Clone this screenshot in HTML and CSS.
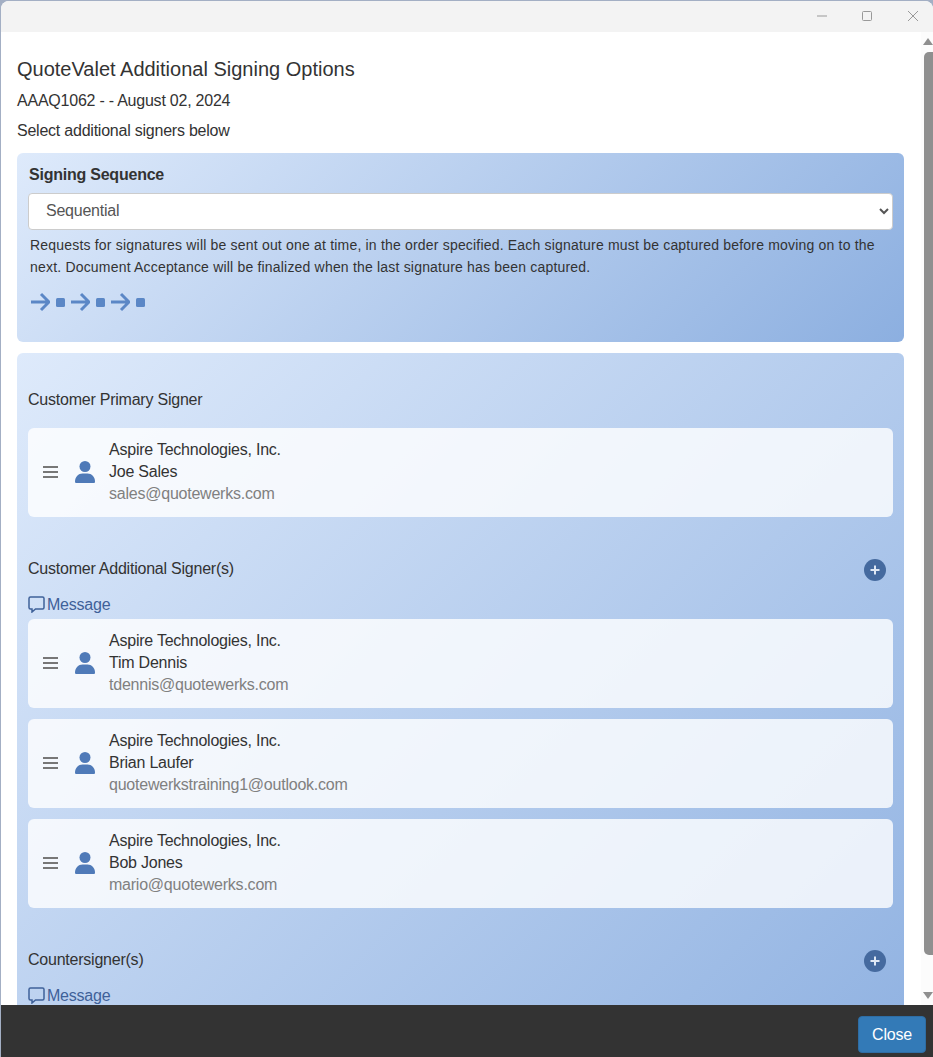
FILE: index.html
```html
<!DOCTYPE html>
<html>
<head>
    <meta charset="UTF-8">
    <title>QuoteValet Additional Signing Options</title>
    <link rel="stylesheet" href="styles.css">
</head>
<body>
<div class="window">
    <div class="titlebar">
        <svg class="win-btn" width="40" height="32" viewBox="3 0 40 32"><path d="M19 16h10" stroke="#999" fill="none"/></svg>
        <svg class="win-btn" width="40" height="32" viewBox="3 0 40 32"><rect x="18.5" y="11.5" width="9" height="9" rx="1" stroke="#999" fill="none"/></svg>
        <svg class="win-btn" width="40" height="32" viewBox="3 0 40 32"><path d="M18 11l10 10M28 11l-10 10" stroke="#999" fill="none"/></svg>
    </div>

    <div class="main">
        <div class="content">
            <h1 class="title">QuoteValet Additional Signing Options</h1>
            <p class="subtitle order-line">AAAQ1062 - - August 02, 2024</p>
            <p class="subtitle">Select additional signers below</p>

            <div class="panel sequence">
                <div class="sequence-label">Signing Sequence</div>
                <select class="sequence-select">
                    <option>Sequential</option>
                </select>
                <p class="sequence-text">Requests for signatures will be sent out one at time, in the order specified. Each signature must be captured before moving on to the next. Document Acceptance will be finalized when the last signature has been captured.</p>
                <div class="sequence-icons">
                    <svg class="arrow" width="20" height="20" viewBox="0 0 20 20"><path d="M1 10h18M11 2l8 8-8 8" /></svg>
                    <span class="stop"></span>
                    <svg class="arrow" width="20" height="20" viewBox="0 0 20 20"><path d="M1 10h18M11 2l8 8-8 8" /></svg>
                    <span class="stop"></span>
                    <svg class="arrow" width="20" height="20" viewBox="0 0 20 20"><path d="M1 10h18M11 2l8 8-8 8" /></svg>
                    <span class="stop"></span>
                </div>
            </div>

            <div class="panel signers">
                <div class="group-head first">
                    <span>Customer Primary Signer</span>
                </div>
                <div class="card">
                    <svg class="drag" width="15" height="12" viewBox="0 0 15 12"><path d="M0 1h15M0 6h15M0 11h15" /></svg>
                    <svg class="person" width="20" height="22" viewBox="0 0 20 22"><circle cx="10" cy="5.500" r="5.500" /><path d="M0 20.500c0-4.500 3.500-8 7.500-8h5c4 0 7.500 3.500 7.500 8 0 1-.5 1.500-1.500 1.500h-17c-1 0-1.500-.5-1.500-1.500z" /></svg>
                    <div class="card-text">
                        <div>Aspire Technologies, Inc.</div>
                        <div>Joe Sales</div>
                        <div class="email">sales@quotewerks.com</div>
                    </div>
                </div>

                <div class="group-head">
                    <span>Customer Additional Signer(s)</span>
                    <svg class="add" width="22" height="22" viewBox="0 0 22 22"><circle cx="11" cy="11" r="11" /><path d="M11 6.500v9M6.500 11h9" /></svg>
                </div>
                <div class="message">
                    <svg width="17" height="17" viewBox="0 0 17 17"><path d="M2.500 1h12A1.500 1.500 0 0 1 16 2.500v9a1.500 1.500 0 0 1-1.500 1.500H7.500L4 16v-3H2.500A1.500 1.500 0 0 1 1 11.500v-9A1.500 1.500 0 0 1 2.500 1z" /></svg>
                    <span>Message</span>
                </div>
                <div class="card">
                    <svg class="drag" width="15" height="12" viewBox="0 0 15 12"><path d="M0 1h15M0 6h15M0 11h15" /></svg>
                    <svg class="person" width="20" height="22" viewBox="0 0 20 22"><circle cx="10" cy="5.500" r="5.500" /><path d="M0 20.500c0-4.500 3.500-8 7.500-8h5c4 0 7.500 3.500 7.500 8 0 1-.5 1.500-1.500 1.500h-17c-1 0-1.500-.5-1.500-1.500z" /></svg>
                    <div class="card-text">
                        <div>Aspire Technologies, Inc.</div>
                        <div>Tim Dennis</div>
                        <div class="email">tdennis@quotewerks.com</div>
                    </div>
                </div>
                <div class="card">
                    <svg class="drag" width="15" height="12" viewBox="0 0 15 12"><path d="M0 1h15M0 6h15M0 11h15" /></svg>
                    <svg class="person" width="20" height="22" viewBox="0 0 20 22"><circle cx="10" cy="5.500" r="5.500" /><path d="M0 20.500c0-4.500 3.500-8 7.500-8h5c4 0 7.500 3.500 7.500 8 0 1-.5 1.500-1.500 1.500h-17c-1 0-1.500-.5-1.500-1.500z" /></svg>
                    <div class="card-text">
                        <div>Aspire Technologies, Inc.</div>
                        <div>Brian Laufer</div>
                        <div class="email">quotewerkstraining1@outlook.com</div>
                    </div>
                </div>
                <div class="card">
                    <svg class="drag" width="15" height="12" viewBox="0 0 15 12"><path d="M0 1h15M0 6h15M0 11h15" /></svg>
                    <svg class="person" width="20" height="22" viewBox="0 0 20 22"><circle cx="10" cy="5.500" r="5.500" /><path d="M0 20.500c0-4.500 3.500-8 7.500-8h5c4 0 7.500 3.500 7.500 8 0 1-.5 1.500-1.500 1.500h-17c-1 0-1.500-.5-1.500-1.500z" /></svg>
                    <div class="card-text">
                        <div>Aspire Technologies, Inc.</div>
                        <div>Bob Jones</div>
                        <div class="email">mario@quotewerks.com</div>
                    </div>
                </div>

                <div class="group-head">
                    <span>Countersigner(s)</span>
                    <svg class="add" width="22" height="22" viewBox="0 0 22 22"><circle cx="11" cy="11" r="11" /><path d="M11 6.500v9M6.500 11h9" /></svg>
                </div>
                <div class="message">
                    <svg width="17" height="17" viewBox="0 0 17 17"><path d="M2.500 1h12A1.500 1.500 0 0 1 16 2.500v9a1.500 1.500 0 0 1-1.500 1.500H7.500L4 16v-3H2.500A1.500 1.500 0 0 1 1 11.500v-9A1.500 1.500 0 0 1 2.500 1z" /></svg>
                    <span>Message</span>
                </div>
            </div>
        </div>

        <div class="scrollbar">
            <span class="scroll-up"></span>
            <div class="scroll-thumb"></div>
            <span class="scroll-down"></span>
        </div>
    </div>

    <div class="footer">
        <button class="close-btn">Close</button>
    </div>
</div>
</body>
</html>
```
FILE: styles.css
```css
* {
    box-sizing: border-box;
}
html, body {
    height: 100%;
    margin: 0;
    overflow: hidden;
}
body {
    font-family: "Liberation Sans", Arial, sans-serif;
    font-size: 16px;
    letter-spacing: -0.23px;
    line-height: 22px;
    color: #333;
    background-color: #a3afc4;
}
.window {
    display: flex;
    flex-direction: column;
    height: 100%;
    margin-top: 1px;
    margin-left: 1px;
    background: white;
    border-top-left-radius: 8px;
    border-top-right-radius: 8px;
    overflow: hidden;
}
.titlebar {
    display: flex;
    flex: none;
    justify-content: flex-end;
    gap: 6px;
    height: 31px;
    background-color: #f3f3f3;
    align-items: center;
}
.win-btn {
    display: block;
    margin-top: -1px;
}
.main {
    display: flex;
    flex: 1;
    min-height: 0;
    overflow: hidden;
}
.content {
    flex: 1;
    min-width: 0;
    padding: 26px 17px 0 16px;
}
.title {
    margin: 0;
    font-size: 20px;
    font-weight: normal;
    letter-spacing: 0;
    line-height: 22px;
}
.subtitle {
    margin: 9px 0 0;
}
.order-line {
    padding-top: 1px;
    margin-bottom: -1px;
}
.panel {
    border-radius: 6px;
    background: linear-gradient(135deg, #deeafb 0%, #8cafe0 100%);
}
.sequence {
    margin-top: 11px;
    padding: 10px 11px 30px;
}
.sequence-label {
    padding-top: 1px;
    padding-left: 1px;
    margin-bottom: -1px;
    font-weight: bold;
}
.sequence-select {
    display: block;
    width: 100%;
    height: 37px;
    margin-top: 8px;
    padding-bottom: 2px;
    padding-left: 13px;
    font-family: "Liberation Sans", Arial, sans-serif;
    font-size: 16px;
    letter-spacing: -0.23px;
    color: #555;
    background-color: white;
    border: 1px solid #ccc;
    border-radius: 4px;
}
.sequence-text {
    margin: 4px 0 0;
    padding-left: 2px;
    font-size: 14px;
    letter-spacing: 0.19px;
}
.sequence-icons {
    display: flex;
    align-items: center;
    height: 20px;
    margin-top: 14px;
    padding-left: 2px;
}
.arrow {
    display: block;
    margin-right: 6px;
}
.arrow path {
    fill: none;
    stroke: #5b87c6;
    stroke-width: 3;
}
.stop {
    width: 9px;
    height: 9px;
    margin-right: 5px;
    border-radius: 1.5px;
    background-color: #5b87c6;
}
.signers {
    margin-top: 11px;
    padding: 35px 11px 140px;
}
.group-head {
    display: flex;
    justify-content: space-between;
    align-items: flex-start;
    height: 22px;
    margin-top: 40px;
    margin-bottom: 15px;
    padding-right: 7px;
}
.group-head span {
    padding-top: 1px;
}
.group-head.first {
    margin-top: 0;
    margin-bottom: 18px;
}
.add {
    display: block;
    margin-top: 2px;
}
.add circle {
    fill: #456a9f;
}
.add path {
    fill: none;
    stroke: #dfe8f5;
    stroke-width: 2;
}
.message {
    display: flex;
    align-items: center;
    gap: 2px;
    height: 21px;
    margin-bottom: 4px;
    color: #3f6199;
}
.message svg {
    display: block;
}
.message path {
    fill: none;
    stroke: #3f6199;
    stroke-width: 1.5;
}
.card {
    display: flex;
    align-items: center;
    height: 89px;
    margin-bottom: 11px;
    padding-left: 15px;
    border-radius: 6px;
    background-color: rgba(255, 255, 255, 0.8);
}
.drag {
    display: block;
    flex: none;
    margin-bottom: 2px;
}
.drag path {
    fill: none;
    stroke: #777;
    stroke-width: 2.2;
}
.person {
    display: block;
    flex: none;
    margin-left: 17px;
    margin-bottom: 2px;
}
.person circle, .person path {
    fill: #4f7ab8;
}
.card-text {
    margin-bottom: 2px;
    margin-left: 14px;
}
.email {
    color: #808080;
}
.scrollbar {
    display: flex;
    flex: none;
    flex-direction: column;
    align-items: flex-end;
    width: 12px;
    background-color: #fcfcfc;
}
.scroll-up, .scroll-down {
    display: block;
    width: 0;
    height: 0;
    border-left: 5px solid transparent;
    border-right: 5px solid transparent;
}
.scroll-up {
    margin-top: 6px;
    border-bottom: 7px solid #8f8f8f;
}
.scroll-thumb {
    width: 9px;
    height: 903px;
    margin-top: 7px;
    background-color: #8f8f8f;
    border-radius: 5px 0 0 5px;
}
.scroll-down {
    margin-top: 37px;
    border-top: 7px solid #8f8f8f;
}
.footer {
    display: flex;
    flex: none;
    justify-content: flex-end;
    height: 53px;
    padding: 11px 7px 0 0;
    background-color: #333;
}
.close-btn {
    width: 68px;
    height: 37px;
    padding: 0;
    font-family: "Liberation Sans", Arial, sans-serif;
    font-size: 16px;
    letter-spacing: -0.23px;
    color: white;
    background-color: #337ab7;
    border: 1px solid #2e6da4;
    border-radius: 4px;
}
```
